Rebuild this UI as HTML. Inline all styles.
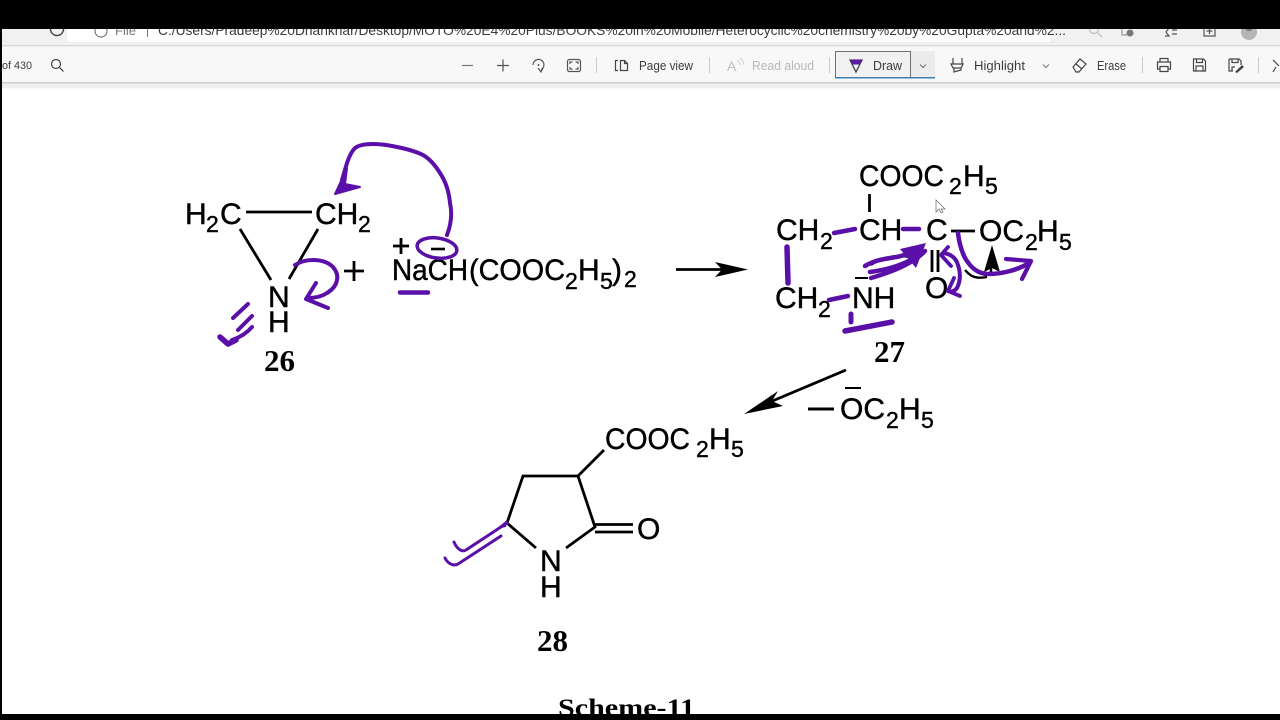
<!DOCTYPE html>
<html lang="en">
<head>
<meta charset="utf-8">
<title>Scheme 11</title>
<style>
html,body{margin:0;padding:0;background:#fff;width:1280px;height:720px;overflow:hidden}
svg{display:block;position:absolute;left:0;top:0}
.ui{font-family:"Liberation Sans",sans-serif;font-size:13px;fill:#3c3c3c}
.url{font-family:"Liberation Sans",sans-serif;font-size:14.2px;fill:#3a3a3a}
.c{font-family:"Liberation Sans",sans-serif;font-size:30px;fill:#000;stroke:#000;stroke-width:.45px}
.d{font-family:"Liberation Sans",sans-serif;font-size:23px;fill:#000;stroke:#000;stroke-width:.4px}
.n{font-family:"Liberation Serif",serif;font-weight:bold;font-size:31px;fill:#000}
.ic{fill:none;stroke:#555;stroke-width:1.2}
.b{fill:none;stroke:#000;stroke-width:2.8;stroke-linecap:butt}
.p{fill:none;stroke:#5a10a8;stroke-width:4;stroke-linecap:round;stroke-linejoin:round}
</style>
</head>
<body>
<svg width="1280" height="720" viewBox="0 0 1280 720" xmlns="http://www.w3.org/2000/svg">
<rect width="1280" height="720" fill="#fff"/>
<!-- browser chrome -->
<rect x="0" y="29" width="1280" height="17" fill="#f1f1f1"/>
<rect x="67" y="20" width="985" height="22" rx="5" fill="#fff"/>
<rect x="0" y="46" width="1280" height="36" fill="#f8f8f8"/>
<rect x="0" y="45" width="1280" height="1.4" fill="#d9d9d9"/>
<rect x="0" y="82" width="1280" height="1.5" fill="#cfcfcf"/>
<rect x="0" y="83.5" width="1280" height="5" fill="#f0f0f0"/>
<circle cx="57" cy="29" r="6.5" class="ic" style="stroke:#444;stroke-width:1.4"/>
<circle cx="101" cy="31" r="6" class="ic" style="stroke:#777"/>
<text x="115" y="35" class="url" style="fill:#777;font-size:13px">File</text>
<rect x="147" y="27" width="1" height="10" fill="#777"/>
<text x="158" y="35" class="url" textLength="908" lengthAdjust="spacingAndGlyphs">C:/Users/Pradeep%20Dhankhar/Desktop/MOTO%20E4%20Plus/BOOKS%20in%20Mobile/Heterocyclic%20chemistry%20by%20Gupta%20and%2...</text>
<circle cx="1094" cy="29" r="4.5" class="ic" style="stroke:#bbb"/>
<path d="M1098 33l4 4" class="ic" style="stroke:#bbb"/>
<path d="M1122 27v8h5" class="ic" style="stroke:#999"/><circle cx="1130" cy="33" r="3.5" fill="#777"/>
<path d="M1165 28h4l-3 4 3 4h-4M1172 30h5M1172 34h5" class="ic"/>
<path d="M1204 26h11v10h-11zM1209.5 28v6M1206.5 31h6" class="ic"/>
<circle cx="1249" cy="32" r="8" fill="#b5b5b5"/><circle cx="1249" cy="27" r="4" fill="#777"/>
<!-- toolbar -->
<text x="2" y="69" class="ui" style="font-size:11px" textLength="30" lengthAdjust="spacingAndGlyphs">of 430</text>
<circle cx="56" cy="64" r="4.5" class="ic" style="stroke:#444"/><path d="M59.5 67.5l4 4" class="ic" style="stroke:#444"/>
<path d="M462 65.5h11" class="ic" style="stroke:#777"/>
<path d="M497 65.5h12M503 59.5v12" class="ic"/>
<path d="M533 65a5.5 5.5 0 1 1 8 4.8" class="ic"/><path d="M538 68l3 4 2-4" class="ic"/><circle cx="538.5" cy="65" r="1" fill="#555"/>
<rect x="567.5" y="59.500" width="13" height="12" rx="2" class="ic"/>
<path d="M570 64v-2h2.5M578 64v-2h-2.5M570 67v2h2.5M578 67v2h-2.5" class="ic"/>
<rect x="596" y="57" width="1" height="16" fill="#ccc"/>
<path d="M618 60.500h-2.500v10h2.500M620.500 70.500V60.500h4l3 3v7zM624.500 60.500v3h3" class="ic" style="stroke:#444"/>
<text x="639" y="70" class="ui" textLength="54" lengthAdjust="spacingAndGlyphs">Page view</text>
<rect x="709" y="57" width="1" height="16" fill="#ccc"/>
<text x="727" y="71" class="ui" style="fill:#c0c0c0;font-size:14px">A</text>
<path d="M737 60q3 2 3 5M740 58q4 3 4 7" fill="none" stroke="#ccc"/>
<text x="752" y="70" class="ui" style="fill:#b8b8b8" textLength="62" lengthAdjust="spacingAndGlyphs">Read aloud</text>
<rect x="829" y="57" width="1" height="16" fill="#ccc"/>
<rect x="835" y="51" width="100" height="27" fill="#ececec"/>
<rect x="835.5" y="51.5" width="75" height="26" fill="#f1f1f1" stroke="#707070"/>
<rect x="835" y="77" width="100" height="1.5" fill="#3d7fb0"/>
<path d="M850 60h12l-6 12z" fill="none" stroke="#444" stroke-width="1.3"/>
<path d="M850 59.500h12.500l-2.500 5h-7.500z" fill="#5a1da0"/>
<text x="873" y="70" class="ui" textLength="29" lengthAdjust="spacingAndGlyphs">Draw</text>
<path d="M920 64.500l3 3 3-3" class="ic" style="stroke:#777"/>
<path d="M953 58v6M962 58v6M951 64h12l-2 4h-8zM954 68v4l7-2v-2" class="ic" style="stroke:#444"/>
<text x="974" y="70" class="ui" textLength="51" lengthAdjust="spacingAndGlyphs">Highlight</text>
<path d="M1043 64.500l3 3 3-3" class="ic" style="stroke:#888"/>
<path d="M1073 67l7-8 6 5-7 8h-3zM1076 64l6 5" class="ic" style="stroke:#444"/>
<text x="1097" y="70" class="ui" textLength="29" lengthAdjust="spacingAndGlyphs">Erase</text>
<rect x="1142" y="57" width="1" height="16" fill="#ccc"/>
<path d="M1160 62v-3.500h8v3.500M1160 69h-2.500v-7h13v7h-2.500M1160 66.500h8v5h-8z" class="ic" style="stroke:#444"/>
<path d="M1193.500 59h10l2 2v10h-12zM1196.500 59v3.500h6V59M1196 71v-5h7v5" class="ic" style="stroke:#444"/>
<path d="M1229 59h10l2 2v4M1229 59v12h4M1232 59v3.500h6V59M1232 71v-4h3" class="ic" style="stroke:#444"/>
<path d="M1235 72l7-7 2 2-7 6z" fill="#444"/>
<rect x="1258" y="57" width="1" height="16" fill="#ccc"/>
<path d="M1273 60l6 6M1276 67l-3 5" class="ic" style="stroke:#444"/>

<!-- 26 -->
<text class="c" x="185" y="224">H</text><text class="d" x="206" y="232">2</text><text class="c" x="220" y="224">C</text>
<text class="c" x="315" y="224">CH</text><text class="d" x="358" y="232">2</text>
<path class="b" d="M246 212H312M240 229L271 280M318 229L289 279"/>
<text class="c" x="268" y="307">N</text>
<text class="c" x="268" y="332">H</text>
<text class="n" x="264" y="371">26</text>
<path d="M344 271h20M354 261v20" stroke="#000" stroke-width="2.8" fill="none"/>
<path d="M393 246h16M401 238v16" stroke="#000" stroke-width="2.8" fill="none"/>
<path d="M431 249h14" stroke="#000" stroke-width="2.6" fill="none"/>
<text class="c" x="392" y="280" textLength="76" lengthAdjust="spacingAndGlyphs">NaCH</text>
<text class="c" x="469" y="280" textLength="96" lengthAdjust="spacingAndGlyphs">(COOC</text>
<text class="d" x="565" y="289">2</text>
<text class="c" x="578" y="280">H</text>
<text class="d" x="600" y="289">5</text>
<text class="c" x="612" y="280">)</text>
<text class="d" x="624" y="287">2</text>

<!-- main arrow -->
<path d="M676 269.500H722" stroke="#000" stroke-width="2.8"/>
<path d="M748 269.500L715 262L722 269.500L715 277z" fill="#000"/>

<!-- 27 -->
<text class="c" x="859" y="186" textLength="85" lengthAdjust="spacingAndGlyphs">COOC</text>
<text class="d" x="949" y="194">2</text>
<text class="c" x="963" y="186">H</text>
<text class="d" x="985" y="194">5</text>
<path class="b" d="M869.500 194V212"/>
<text class="c" x="776" y="240">CH</text><text class="d" x="820" y="249">2</text>
<text class="c" x="859" y="240">CH</text>
<text class="c" x="926" y="240">C</text>
<path class="b" d="M951 231H975"/>
<text class="c" x="979" y="241">OC</text><text class="d" x="1025" y="250">2</text><text class="c" x="1037" y="241">H</text><text class="d" x="1059" y="250">5</text>
<text class="c" x="775" y="308">CH</text><text class="d" x="818" y="317">2</text>
<text class="c" x="852" y="308">NH</text>
<path d="M855 278H868" stroke="#000" stroke-width="2"/>
<text class="c" x="925" y="298">O</text>
<path class="b" d="M932 250V272M938 250V272"/>
<path d="M871 265q18-12 38-8" fill="none" stroke="#000" stroke-width="2.2"/>
<path d="M965 270q6 7 12 7.500q5 .5 10-.5" fill="none" stroke="#000" stroke-width="2.4"/>
<path d="M992 245L984 272L992 268L1000 272z" fill="#000"/>
<path d="M991 268V276" stroke="#000" stroke-width="2.5"/>
<text class="n" x="874" y="362">27</text>

<!-- elimination arrow -->
<path d="M846 370L770 402" stroke="#000" stroke-width="2.8"/>
<path d="M744 414L778 391L772 401L783 406z" fill="#000"/>
<path d="M808 409H834" stroke="#000" stroke-width="3"/>
<path d="M845 388H861" stroke="#000" stroke-width="2"/>
<text class="c" x="840" y="419">OC</text><text class="d" x="886" y="428">2</text><text class="c" x="899" y="419">H</text><text class="d" x="921" y="428">5</text>

<!-- 28 -->
<text class="c" x="605" y="449" textLength="85" lengthAdjust="spacingAndGlyphs">COOC</text>
<text class="d" x="696" y="457">2</text>
<text class="c" x="709" y="449">H</text>
<text class="d" x="731" y="457">5</text>
<path class="b" d="M604 450L578 476H523L507 523L536 548M566 548L595 527L578 476"/>
<path class="b" d="M595 524.500H633M595 532H633"/>
<text class="c" x="637" y="539">O</text>
<text class="c" x="540" y="571">N</text>
<text class="c" x="540" y="597">H</text>
<text class="n" x="537" y="651">28</text>
<text x="558" y="716" font-family="Liberation Serif, serif" font-weight="bold" font-size="25.5" fill="#000" textLength="137" lengthAdjust="spacingAndGlyphs">Scheme-11</text>

<!-- purple annotations -->
<path class="p" d="M447 235C452 222 452 212 450 203C449 192 446 182 440 173C435 165 430 159 423 155C415 151 407 149 397 147C388 145 380 144 373 144C365 144 359 145 355 148C351 152 349 157 347 163L342 180"/>
<path d="M347 168L335 194L360 187L345 184z" fill="#5a10a8" stroke="#5a10a8" stroke-width="2" stroke-linejoin="round"/>
<ellipse cx="437" cy="248" rx="20" ry="10" transform="rotate(8 437 248)" class="p" style="stroke-width:3.5"/>
<path class="p" d="M295 265C301 261 307 260 313 260C322 260 329 263 333 267C337 272 338 276 337 280C336 286 332 290 327 293C321 297 314 298 308 298"/>
<path class="p" d="M316 283L306 299L328 308"/>
<path class="p" d="M400 292.500H428" style="stroke-width:4.500"/>
<path class="p" d="M233 318L248 304M238 330L252 316M232 340C238 338 246 334 252 327"/>
<path class="p" d="M220 337L228 344L236 340" style="stroke-width:5.500"/>
<path class="p" d="M834 233L855 229M903 229H919M829 300L848 296" style="stroke-width:4.500"/>
<path class="p" d="M787 247L788 283" style="stroke-width:5.500"/>
<path class="p" d="M851 314V322" style="stroke-width:5"/>
<path class="p" d="M845 331L892 322" style="stroke-width:5.500"/>
<path class="p" d="M865 266C882 256 896 260 912 252M870 272C885 270 905 266 925 251M871 278C892 272 912 264 924 252" style="stroke-width:4.500"/>
<path d="M900 249L926 243L916 268z" fill="#5a10a8"/>
<path class="p" d="M943 253C951 254 956 258 958 265C961 274 960 282 957 288C954 292 951 292 948 291"/>
<path class="p" d="M948 247L941 255L951 266M954 278L948 291L960 296" style="stroke-width:3.800"/>
<path class="p" d="M958 233C959 242 961 250 965 258C971 268 978 274 988 274C1002 274 1018 270 1029 263" style="stroke-width:4.500"/>
<path class="p" d="M1006 259L1031 261L1022 279" style="stroke-width:4.200"/>
<path d="M506 527L496 529L507 520z" fill="#5a10a8"/>
<path class="p" d="M507 523L466 550C461 553 456 547 454 542" style="stroke-width:3"/>
<path class="p" d="M501 536L458 564C452 567 447 562 445 558" style="stroke-width:3"/>
<path d="M936 200l0 12l3-3l2 4l2-1l-2-3h4z" fill="#fff" stroke="#777" stroke-width="0.8"/>

<!-- frame -->
<rect x="0" y="0" width="1280" height="29" fill="#000"/>
<rect x="0" y="714" width="1280" height="6" fill="#000"/>
<rect x="0" y="29" width="2" height="691" fill="#000"/>
</svg>
</body>
</html>
